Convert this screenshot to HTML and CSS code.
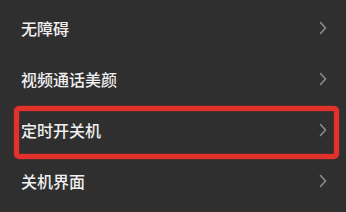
FILE: index.html
```html
<!DOCTYPE html>
<html lang="zh">
<head>
    <meta charset="UTF-8">
    <meta name="viewport" content="width=device-width, initial-scale=1.0">
    <title>设置</title>
    <link rel="stylesheet" href="styles.css">
</head>
<body>
    <ul class="settings-list">
        <li class="settings-item">
            <span>无障碍</span>
            <svg class="chevron" width="8" height="14" viewBox="0 0 8 14"><polyline points="1.5,1.5 6.5,7 1.5,12.5"/></svg>
        </li>
        <li class="settings-item">
            <span>视频通话美颜</span>
            <svg class="chevron" width="8" height="14" viewBox="0 0 8 14"><polyline points="1.5,1.5 6.5,7 1.5,12.5"/></svg>
        </li>
        <li class="settings-item marked">
            <span>定时开关机</span>
            <svg class="chevron" width="8" height="14" viewBox="0 0 8 14"><polyline points="1.5,1.5 6.5,7 1.5,12.5"/></svg>
        </li>
        <li class="settings-item">
            <span>关机界面</span>
            <svg class="chevron" width="8" height="14" viewBox="0 0 8 14"><polyline points="1.5,1.5 6.5,7 1.5,12.5"/></svg>
        </li>
    </ul>
</body>
</html>
```

FILE: styles.css
```css
body {
    margin: 0;
    background-color: #2f2f2f;
    font-family: "Noto Sans CJK SC", "Noto Sans", sans-serif;
    color: #efefef;
    height: 212px;
    overflow: hidden;
}
.settings-list {
    list-style: none;
    margin: 0;
    padding: 2px 0 0 0;
}
.settings-item {
    position: relative;
    display: flex;
    align-items: center;
    justify-content: space-between;
    height: 51px;
    padding: 0 19px 0 21px;
    font-size: 16px;
    font-weight: 500;
}
.chevron {
    fill: none;
    stroke: #8c8c8c;
    stroke-width: 1.6;
    stroke-linecap: round;
    stroke-linejoin: round;
}
.marked::after {
    content: "";
    position: absolute;
    top: 2px;
    bottom: -4px;
    left: 14px;
    right: 7px;
    border: 5px solid #e3312c;
    border-radius: 5px;
    box-shadow: 0 0 2px rgba(227, 49, 44, 0.6), inset 0 0 2px rgba(227, 49, 44, 0.6);
}
```
